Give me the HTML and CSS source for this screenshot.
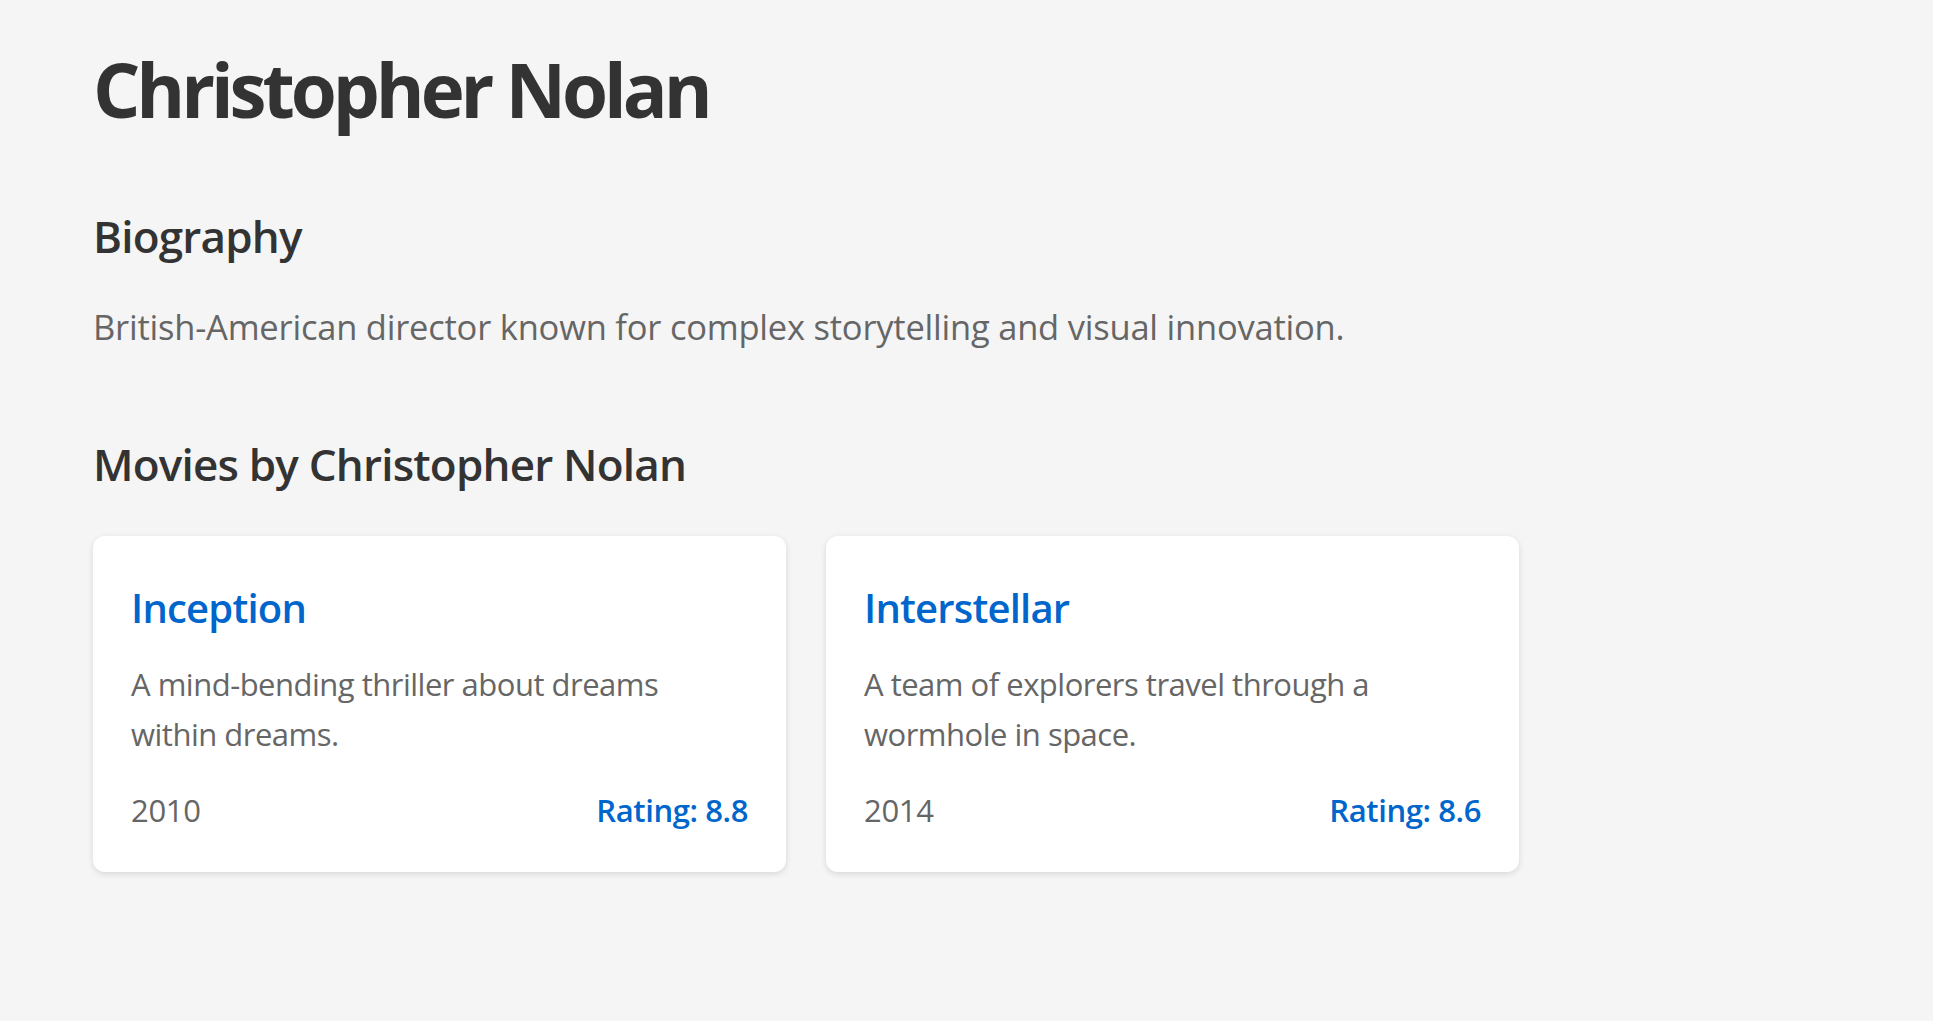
FILE: index.html
```html
<!DOCTYPE html>
<html lang="en">
<head>
<meta charset="utf-8">
<title>Christopher Nolan</title>
<link rel="stylesheet" href="styles.css">
</head>
<body>
<main class="page">
  <h1 class="name">Christopher Nolan</h1>
  <section class="bio">
    <h2 class="section-title">Biography</h2>
    <p class="bio-text">British-American director known for complex storytelling and visual innovation.</p>
  </section>
  <section class="movies">
    <h2 class="section-title">Movies by Christopher Nolan</h2>
    <div class="movie-grid">
      <article class="movie-card">
        <h3 class="movie-title">Inception</h3>
        <p class="movie-desc">A mind-bending thriller about dreams within dreams.</p>
        <div class="movie-meta">
          <span class="movie-year">2010</span>
          <span class="movie-rating">Rating: 8.8</span>
        </div>
      </article>
      <article class="movie-card">
        <h3 class="movie-title">Interstellar</h3>
        <p class="movie-desc">A team of explorers travel through a wormhole in space.</p>
        <div class="movie-meta">
          <span class="movie-year">2014</span>
          <span class="movie-rating">Rating: 8.6</span>
        </div>
      </article>
    </div>
  </section>
</main>
</body>
</html>
```

FILE: styles.css
```css
html, body {
  margin: 0;
  padding: 0;
}

body {
  background: #f5f5f5;
  font-family: "Open Sans", "Noto Sans", sans-serif;
  color: #333333;
}

.page {
  padding: 44px 93px 60px 93px;
}

.name {
  margin: 0;
  font-size: 74.5px;
  line-height: 90px;
  font-weight: 700;
  letter-spacing: -4.1px;
  color: #333333;
}

.section-title {
  margin: 0;
  font-size: 44px;
  line-height: 53px;
  font-weight: 600;
  letter-spacing: -0.8px;
  color: #333333;
}

.bio {
  margin-top: 76px;
}

.bio-text {
  margin: 36px 0 0 0;
  font-size: 34.5px;
  line-height: 55px;
  letter-spacing: -0.22px;
  color: #666666;
}

.movies {
  margin-top: 84px;
}

.movie-grid {
  margin-top: 45px;
  display: grid;
  grid-template-columns: repeat(2, 693px);
  gap: 40px;
}

.movie-card {
  background: #ffffff;
  border-radius: 12px;
  box-shadow: 0 2px 6px rgba(0, 0, 0, 0.12);
  padding: 48px 38px 37px 38px;
}

.movie-title {
  margin: 0;
  font-size: 40px;
  line-height: 48px;
  font-weight: 600;
  letter-spacing: -0.8px;
  color: #0066cc;
}

.movie-desc {
  margin: 28px 0 0 0;
  font-size: 31px;
  line-height: 49.5px;
  letter-spacing: -0.5px;
  color: #666666;
}

.movie-meta {
  margin-top: 26.5px;
  display: flex;
  justify-content: space-between;
  font-size: 31px;
  line-height: 49px;
}

.movie-year {
  color: #666666;
  letter-spacing: -0.3px;
}

.movie-rating {
  color: #0066cc;
  font-weight: 600;
  letter-spacing: -0.4px;
}
```
